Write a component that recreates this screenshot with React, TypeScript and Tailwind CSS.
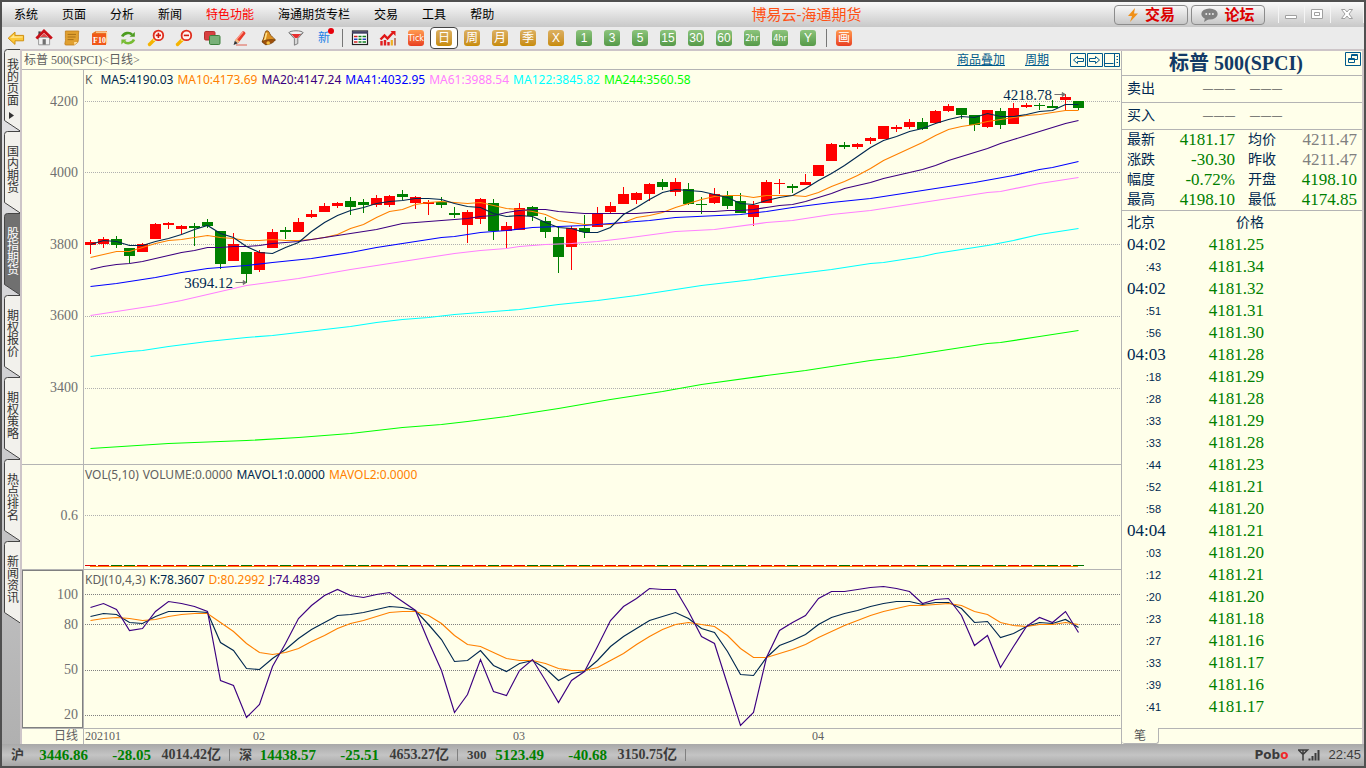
import React from "react";

type Candle = [color: string, high: number, top: number, bottom: number, low: number];
type Point = [index: number, y: number];

const LEFT = 84;
const WIDTH = 1037;
const centre = (index: number) => 90 + index * 13;

const candles: Candle[] = [
  ["r", 240, 242, 245, 254], ["r", 237, 239, 244, 248], ["g", 236, 239, 245, 248], ["g", 248, 248, 256, 263],
  ["r", 243, 244, 252, 252], ["r", 223, 224, 239, 239], ["r", 222, 223, 225, 229], ["r", 225, 226, 229, 234],
  ["g", 223, 226, 228, 246], ["g", 219, 222, 226, 228], ["g", 231, 231, 264, 269], ["r", 233, 244, 261, 261],
  ["g", 252, 252, 274, 283], ["r", 250, 252, 270, 272], ["r", 229, 232, 248, 248], ["g", 227, 230, 232, 239],
  ["r", 218, 222, 232, 232], ["r", 210, 214, 217, 218], ["r", 203, 206, 212, 212], ["r", 202, 203, 206, 208],
  ["g", 197, 201, 207, 215], ["g", 199, 202, 205, 213], ["r", 195, 198, 205, 207], ["r", 195, 196, 205, 207],
  ["g", 190, 194, 197, 200], ["r", 196, 197, 203, 209], ["r", 200, 202, 204, 215], ["g", 197, 202, 205, 208],
  ["g", 207, 213, 215, 218], ["r", 210, 212, 225, 243], ["r", 198, 199, 219, 224], ["g", 199, 203, 231, 240],
  ["r", 222, 226, 231, 248], ["r", 203, 208, 230, 230], ["g", 206, 207, 216, 221], ["g", 217, 221, 232, 238],
  ["g", 227, 237, 257, 273], ["r", 226, 228, 247, 270], ["g", 215, 228, 232, 238], ["r", 207, 213, 227, 227],
  ["r", 202, 206, 212, 213], ["r", 187, 194, 204, 204], ["r", 192, 193, 200, 204], ["r", 183, 184, 194, 201],
  ["g", 179, 182, 187, 190], ["r", 178, 182, 192, 196], ["g", 183, 189, 204, 205], ["g", 197, 204, 205, 214],
  ["r", 188, 194, 203, 204], ["g", 191, 196, 206, 209], ["g", 193, 201, 213, 213], ["r", 201, 205, 217, 226],
  ["r", 180, 182, 203, 203], ["r", 179, 183, 184, 194], ["g", 184, 186, 188, 193], ["r", 174, 182, 185, 185],
  ["r", 165, 165, 176, 176], ["r", 143, 144, 161, 161], ["g", 142, 145, 147, 149], ["r", 143, 144, 147, 149],
  ["r", 137, 138, 141, 144], ["r", 126, 126, 139, 139], ["r", 125, 127, 129, 132], ["r", 119, 122, 127, 129],
  ["g", 118, 122, 129, 130], ["r", 110, 111, 123, 123], ["r", 104, 106, 111, 112], ["g", 108, 108, 115, 119],
  ["g", 115, 115, 125, 131], ["r", 110, 110, 127, 128], ["g", 108, 111, 125, 129], ["r", 103, 108, 124, 124],
  ["r", 103, 105, 107, 108], ["g", 103, 105, 106, 110], ["g", 100, 106, 108, 108], ["r", 94, 97, 100, 110],
  ["g", 101, 101, 108, 110],
];

const dense = (values: number[]): Point[] => values.map((y, i) => [i, y]);

const ma5 = dense([244, 240, 241, 245, 245, 241, 238, 234, 229, 225, 233, 237, 246, 252, 253, 247, 242, 231, 222, 215, 210, 207, 203, 201, 200, 198, 198, 199, 203, 206, 207, 213, 216, 215, 216, 222, 227, 228, 232, 232, 227, 214, 207, 199, 192, 189, 190, 191, 194, 197, 203, 204, 200, 197, 195, 188, 180, 173, 165, 156, 147, 140, 136, 131, 128, 123, 119, 116, 117, 113, 116, 116, 114, 111, 110, 104, 104]);
const ma10 = dense([257, 254, 251, 251, 247, 243, 240, 239, 237, 235, 237, 238, 240, 240, 239, 240, 240, 239, 237, 234, 228, 224, 217, 211, 209, 204, 202, 201, 202, 203, 202, 205, 208, 209, 211, 214, 220, 222, 224, 224, 224, 222, 217, 215, 212, 207, 203, 199, 196, 195, 195, 197, 195, 195, 195, 196, 192, 186, 181, 175, 168, 160, 154, 148, 142, 135, 129, 126, 124, 121, 119, 117, 115, 114, 112, 110, 110]);
const ma20 = dense([269, 266, 264, 263, 261, 258, 255, 252, 250, 247, 247, 246, 246, 245, 243, 242, 241, 239, 237, 235, 233, 231, 229, 226, 223, 222, 221, 220, 219, 218, 216, 215, 212, 210, 209, 209, 211, 212, 213, 213, 213, 213, 213, 212, 211, 211, 211, 211, 211, 210, 210, 209, 207, 205, 204, 201, 197, 193, 188, 185, 182, 178, 175, 172, 169, 165, 160, 156, 152, 148, 143, 139, 135, 131, 127, 123, 120]);
const ma41: Point[] = [[0, 286], [2, 283], [5, 277], [7, 272], [9, 268], [12, 265], [14, 262], [17, 258], [20, 252], [22, 247], [25, 241], [27, 237], [28, 236], [30, 232], [32, 230], [34, 227], [36, 226], [38, 225], [40, 223], [43, 220], [45, 217], [50, 214], [52, 211], [54, 207], [57, 202], [60, 198], [62, 194], [65, 188], [68, 182], [71, 175], [73, 169], [74, 167], [76, 161]];
const ma61: Point[] = [[0, 315], [3, 309], [5, 305], [7, 300], [10, 291], [12, 285], [16, 278], [20, 269], [24, 261], [28, 253], [30, 250], [32, 248], [33, 246], [35, 244], [37, 243], [39, 241], [41, 238], [45, 231], [48, 229], [52, 222], [54, 220], [57, 214], [60, 210], [64, 202], [69, 192], [70, 191], [73, 183], [76, 177]];
const ma122: Point[] = [[0, 356], [3, 351], [4, 350], [6, 346], [9, 341], [12, 337], [14, 335], [18, 329], [20, 326], [22, 322], [24, 319], [26, 317], [28, 314], [33, 309], [36, 304], [39, 300], [42, 295], [45, 289], [47, 285], [51, 279], [52, 277], [57, 269], [60, 263], [61, 262], [64, 256], [65, 253], [69, 245], [71, 240], [73, 234], [76, 228]];
const ma244: Point[] = [[0, 448], [6, 443], [12, 440], [16, 437], [20, 433], [24, 427], [27, 424], [29, 421], [32, 416], [36, 408], [40, 399], [44, 391], [47, 384], [52, 375], [55, 370], [57, 366], [60, 360], [62, 357], [65, 351], [69, 343], [70, 342], [73, 336], [76, 330]];

const kLine = dense([616, 613, 614, 622, 623, 616, 611, 611, 611, 612, 642, 650, 668, 669, 658, 649, 638, 629, 622, 615, 614, 612, 609, 606, 607, 610, 624, 639, 661, 660, 650, 665, 671, 663, 660, 668, 680, 673, 671, 660, 646, 636, 628, 620, 616, 612, 618, 628, 632, 651, 674, 675, 657, 645, 640, 634, 624, 617, 613, 610, 606, 603, 601, 601, 604, 602, 602, 608, 622, 621, 637, 633, 626, 622, 623, 619, 627]);
const dLine = dense([620, 618, 617, 618, 620, 619, 616, 614, 613, 613, 622, 631, 643, 652, 654, 652, 648, 641, 635, 628, 623, 620, 616, 612, 611, 611, 615, 623, 635, 644, 646, 652, 658, 660, 660, 663, 668, 670, 670, 667, 660, 653, 644, 636, 629, 624, 622, 624, 626, 635, 648, 657, 657, 653, 649, 644, 637, 631, 625, 620, 615, 611, 608, 605, 605, 604, 603, 605, 611, 614, 622, 625, 626, 624, 624, 622, 624]);
const jLine = dense([607, 603, 609, 630, 628, 611, 601, 603, 606, 611, 680, 685, 717, 704, 666, 643, 618, 605, 595, 589, 595, 597, 594, 592, 601, 610, 641, 670, 712, 694, 659, 691, 695, 670, 659, 680, 702, 680, 671, 646, 620, 606, 598, 588, 589, 589, 611, 636, 643, 684, 725, 712, 657, 630, 622, 615, 598, 591, 591, 589, 587, 586, 588, 591, 603, 599, 598, 615, 645, 635, 667, 646, 626, 617, 622, 611, 632]);

const SERIF = "font-['Liberation_Serif','Noto_Sans_CJK_SC',serif]";
const LEGEND = "font-['Noto_Sans',sans-serif]";

function Line({ points, color }: { points: Point[]; color: string }) {
  return (
    <polyline
      points={points.map(([i, y]) => `${centre(i) + 0.5},${y + 0.5}`).join(" ")}
      fill="none"
      stroke={color}
      strokeWidth="1.15"
      vectorEffect="non-scaling-stroke"
    />
  );
}

interface PanelProps {
  top: number;
  height: number;
  grid: number[];
  gridColor: string;
  labels: [string, number][];
  boxed?: boolean;
  legend: [string, string][];
  notes?: [string, number, number][];
  className: string;
  children: React.ReactNode;
}

function Panel({ top, height, grid, gridColor, labels, boxed, legend, notes = [], className, children }: PanelProps) {
  return (
    <section className={`flex min-h-0 basis-0 border-b border-[#b4b4b4] ${className}`}>
      <div className={`relative w-[61px] shrink-0 border ${boxed ? "border-[#808080]" : "border-transparent"}`}>
        {labels.map(([text, y]) => (
          <span
            key={text}
            className={`absolute right-1 -translate-y-1/2 text-sm leading-4 text-[#707070] ${SERIF}`}
            style={{ top: `${((y + 0.5 - top) / height) * 100}%` }}
          >
            {text}
          </span>
        ))}
      </div>
      <div className="relative min-w-0 flex-1 border-l border-[#b4b4b4]">
        <svg className="absolute inset-0 h-full w-full" viewBox={`${LEFT} ${top} ${WIDTH} ${height}`} preserveAspectRatio="none">
          {grid.map((y) => (
            <line key={y} x1={LEFT + 1} x2={LEFT + WIDTH} y1={y + 0.5} y2={y + 0.5} stroke={gridColor} strokeDasharray="1 1" shapeRendering="crispEdges" />
          ))}
          {children}
        </svg>
        <div className={`absolute left-px top-0.5 flex gap-1 whitespace-nowrap text-xs leading-4 ${LEGEND}`}>
          {legend.map(([text, color]) => (
            <span key={text} className={color}>{text}</span>
          ))}
        </div>
        {notes.map(([text, x, y]) => (
          <span
            key={text}
            className={`absolute flex -translate-x-full -translate-y-1/2 items-center gap-0.5 text-[15px] leading-4 text-[#002850] ${SERIF}`}
            style={{ left: `${((x - LEFT) / WIDTH) * 100}%`, top: `${((y + 0.5 - top) / height) * 100}%` }}
          >
            {text}
            <svg width="12" height="7" viewBox="0 0 12 7" stroke="#707070" fill="#707070">
              <path d="M0 3.5h10" />
              <path d="M8 1.5l3 2-3 2z" />
            </svg>
          </span>
        ))}
      </div>
    </section>
  );
}

function Tile({ label, tone }: { label: string; tone: "gold" | "green" | "red" }) {
  const tones = {
    gold: "from-[#dcb060] to-[#c88c00]",
    green: "from-[#8cc47c] to-[#559a48]",
    red: "from-[#ff9a50] to-[#e83c20]",
  };
  return (
    <span
      className={`flex size-4 items-center justify-center rounded-[3px] bg-linear-to-b text-white ${tones[tone]} ${
        label.length > 2 ? "font-['Liberation_Sans_Narrow','DejaVu_Sans_Condensed',sans-serif] text-[9px] leading-4" : "font-['Liberation_Sans','Noto_Sans_CJK_SC',sans-serif] text-xs leading-4"
      }`}
    >
      {label}
    </span>
  );
}

function Icon({ children }: { children: React.ReactNode }) {
  return <svg width="18" height="18" viewBox="0 0 18 18" aria-hidden="true">{children}</svg>;
}

function Magnifier({ plus }: { plus: boolean }) {
  return (
    <Icon>
      <path d="M2.5 15.5l4.5-4.5" stroke="#f5b400" strokeWidth="3.4" strokeLinecap="round" />
      <path d="M6.4 11.6l1.4-1.4" stroke="#ffe680" strokeWidth="2" />
      <circle cx="11.4" cy="6.4" r="4.8" fill="#fff4f2" stroke="#e02c1c" strokeWidth="1.8" />
      <path d={plus ? "M8.8 6.4h5.2M11.4 3.8v5.2" : "M8.8 6.4h5.2"} stroke="#d01c10" strokeWidth="1.6" />
    </Icon>
  );
}

const tools: { name: string; icon: React.ReactNode }[] = [
  { name: "后退", icon: <Icon><path d="M1.2 9.2L8 3v3.4h8.6v5.4H8v3.6z" fill="#fcc838" stroke="#d09010" /><path d="M3.4 9L7 5.8v1.6h8.6v1.2z" fill="#ffe896" /></Icon> },
  { name: "首页", icon: <Icon><path d="M3.6 8.4h11v7.4h-11z" fill="#f2f2f2" stroke="#888" strokeWidth=".8" /><path d="M3.4 2.4h2.4v4H3.4z" fill="#444" /><path d="M1.4 9.4L9 2l7.8 7.4" fill="none" stroke="#c81018" strokeWidth="2.8" /><path d="M5.4 8L9 4.4 12.8 8z" fill="#e04848" /><path d="M7.6 10.2h3.2v5.4H7.6z" fill="#707070" /></Icon> },
  { name: "便笺", icon: <Icon><path d="M2.4 2h13.4c-1 4 .4 8-1 11.4l-3.6 2.6H2.4c-1.4-1.4.6-3.4 0-6.4z" fill="#e0a030" stroke="#c07c18" strokeWidth=".8" /><path d="M4.6 5.4h8.4M4.6 8h8M4.6 10.6h6" stroke="#a87018" strokeWidth="1" /><path d="M11.2 16v-3h3.6z" fill="#ffe0a0" /></Icon> },
  { name: "F10", icon: <Icon><path d="M1 4.5l4-2.500h11v11l-1.500 3H1z" fill="#e87020" /><path d="M5 3.200h10.500M15.800 3v11" stroke="#ffe0b0" strokeWidth="1.200" /><rect x="1" y="5" width="14" height="11" fill="#f05818" /><text x="2" y="13.600" fill="#fff" fontSize="8" fontWeight="bold" fontFamily="Liberation Serif, serif">F10</text></Icon> },
  { name: "刷新", icon: <Icon><path d="M3.200 7.600C4.800 3.600 10.600 3 13 5.600" fill="none" stroke="#4c9c20" strokeWidth="2.600" /><path d="M10.600 7.800h5.200V3z" fill="#4c9c20" /><path d="M15 10.600c-1.600 4-7.400 4.600-9.800 2" fill="none" stroke="#78bc34" strokeWidth="2.600" /><path d="M7.600 10.400H2.400v5z" fill="#78bc34" /></Icon> },
  { name: "放大", icon: <Magnifier plus /> },
  { name: "缩小", icon: <Magnifier plus={false} /> },
  { name: "叠加", icon: <Icon><rect x="1.500" y="2.500" width="10.500" height="8.500" rx="1.200" fill="#d84040" stroke="#b43030" /><rect x="6.500" y="6.500" width="10.500" height="9" rx="1.200" fill="#78b078" stroke="#3c803c" /></Icon> },
  { name: "画笔", icon: <Icon><path d="M2.600 16l1.200-4.200 3 2.400z" fill="#333" /><path d="M4 11.400L11.400 2.400c1.600-.600 3.200.800 3 2.400L7.200 14z" fill="#e83c2c" /><path d="M5 11.200l7-8.200" stroke="#ffa090" strokeWidth="1.200" /><path d="M4 11.400l1.400-1.600 3 2.600L7 14z" fill="#f0c080" /><path d="M5 16h11" stroke="#e06050" /></Icon> },
  { name: "预警", icon: <Icon><path d="M6.800 2.200c2-1.200 3.600.800 3.800 2.200 1.400 3 4 4.400 5.800 6.400L7 15.600 3 12.600C5.400 9.200 5 5.600 6.800 2.200z" fill="#dc9020" stroke="#80480c" strokeWidth=".9" /><path d="M7.600 3.800c-.8 2.400-.8 5-2.200 8" fill="none" stroke="#ffe088" strokeWidth="1.600" /><path d="M3 12.800c3-2.200 9.400-2.800 13.200-1.800-2 3.600-7.800 5-10 4.600z" fill="#a0500c" stroke="#70400c" strokeWidth=".7" /><circle cx="9.200" cy="14" r="1.800" fill="#f4c040" /></Icon> },
  { name: "筛选", icon: <Icon><path d="M2 3.800l5.400 5.800v6.600l3.400-1.600v-5L16 3.800z" fill="#d8d8d8" stroke="#686868" strokeWidth=".8" /><ellipse cx="9" cy="3.800" rx="7" ry="2" fill="#f0f0f0" stroke="#777" /><path d="M4.400 5l3.600 4h2.400l3.400-4z" fill="#e83030" /></Icon> },
  { name: "新", icon: <span className="relative text-xs leading-4 text-[#2080e8]">新<span className="absolute -right-1 -top-0.5 size-1.5 rounded-full bg-red-600" /></span> },
];

const views: { name: string; icon: React.ReactNode }[] = [
  { name: "报价表", icon: <Icon><rect x="1.500" y="2" width="15" height="13.500" fill="#fff" stroke="#222" strokeWidth="1.200" /><path d="M1 3.500h16" stroke="#446" strokeWidth="2.400" /><path d="M3 7.500h3.500M3 13h3.500" stroke="#d02020" strokeWidth="1.400" /><path d="M3 10.200h3.500M11.500 10.200H15" stroke="#2040c0" strokeWidth="1.400" /><path d="M7.500 7.500h3M7.500 10.200h3M7.500 13h3M11.500 7.500H15M11.500 13H15" stroke="#108020" strokeWidth="1.400" /></Icon> },
  { name: "走势图", icon: <Icon><path d="M2.500 12v4.500M6 11v5.500M9.500 13v3.500" stroke="#e02020" strokeWidth="2.400" /><path d="M12.800 11v5.500" stroke="#f0b020" strokeWidth="2.200" /><path d="M16 9v7.500" stroke="#c08070" strokeWidth="2" /><path d="M1.500 10.500l4-4 3 3 6-6.500" fill="none" stroke="#e01818" strokeWidth="2.400" /><path d="M11.500 2h5v5z" fill="#e01818" /></Icon> },
  { name: "Tick", icon: <Tile label="Tick" tone="red" /> },
  ...["日", "周", "月", "季", "X"].map((label) => ({ name: label, icon: <Tile label={label} tone="gold" /> })),
  ...["1", "3", "5", "15", "30", "60", "2hr", "4hr", "Y"].map((label) => ({ name: label, icon: <Tile label={label} tone="green" /> })),
];

function ToolButton({ name, icon }: { name: string; icon: React.ReactNode }) {
  const active = name === "日";
  return (
    <button
      type="button"
      aria-label={name}
      aria-pressed={active}
      className={`flex h-[22px] w-7 shrink-0 items-center justify-center rounded-[4px] border ${active ? "border-[#444] bg-white" : "border-transparent"}`}
    >
      {icon}
    </button>
  );
}

const Divider = () => (
  <span className="flex w-2 shrink-0 justify-center">
    <span className="h-[18px] w-px bg-[#777]" />
  </span>
);

const menus = ["系统", "页面", "分析", "新闻", "特色功能", "海通期货专栏", "交易", "工具", "帮助"];
const pages = ["我的页面", "国内期货", "股指期货", "期权报价", "期权策略", "热点排名", "新闻资讯"];

function PageTab({ name }: { name: string }) {
  const active = name === "股指期货";
  const first = name === "我的页面";
  return (
    <button type="button" className={`relative flex h-[82px] w-[18px] shrink-0 flex-col items-center pl-px ${first ? "pt-[9px]" : "pt-[14px]"} ${active ? "text-white" : "text-[#333]"}`}>
      <svg className="absolute inset-0" width="18" height="82" viewBox="0 0 18 82" aria-hidden="true">
        <path d="M19 .5H5.500Q2.500.5 2.500 3.500V71.500L19 82.500z" fill={active ? "#707070" : "#f2f1ec"} stroke="#444" />
      </svg>
      <span className="relative text-xs leading-3 [writing-mode:vertical-rl]">{name}</span>
      {first && <svg className="relative mt-1.5" width="5" height="7" viewBox="0 0 5 7"><path d="M0 0l5 3.500L0 7z" fill="#333" /></svg>}
    </button>
  );
}

const quotes: [string, string, string, string, boolean][] = [
  ["最新", "4181.17", "均价", "4211.47", true],
  ["涨跌", "-30.30", "昨收", "4211.47", true],
  ["幅度", "-0.72%", "开盘", "4198.10", false],
  ["最高", "4198.10", "最低", "4174.85", false],
];

const ticks: [string, string][] = [
  ["04:02", "4181.25"], [":43", "4181.34"], ["04:02", "4181.32"], [":51", "4181.31"], [":56", "4181.30"],
  ["04:03", "4181.28"], [":18", "4181.29"], [":28", "4181.28"], [":33", "4181.29"], [":33", "4181.28"],
  [":44", "4181.23"], [":52", "4181.21"], [":58", "4181.20"], ["04:04", "4181.21"], [":03", "4181.20"],
  [":12", "4181.21"], [":20", "4181.20"], [":23", "4181.18"], [":27", "4181.16"], [":33", "4181.17"],
  [":39", "4181.16"], [":41", "4181.17"],
];

function Dashes() {
  return (
    <span className="flex gap-px text-[10px] font-bold leading-4 text-[#606060]">
      <span>—</span><span>—</span><span>—</span>
    </span>
  );
}

function QuotePanel() {
  return (
    <aside className={`flex w-[240px] shrink-0 flex-col text-[#002850] ${SERIF}`}>
      <div className="relative flex h-[25px] items-center justify-center border-b border-[#b4b4b4] pr-3">
        <h2 className="whitespace-nowrap text-xl font-bold leading-6 text-[#123a66]">标普 500(SPCI)</h2>
        <button type="button" aria-label="弹出窗口" className="absolute right-px top-px">
          <svg width="16" height="14" viewBox="0 0 16 14" fill="none" stroke="#005a8c">
            <path d="M.5.5h15v13H.5zM6.500 6V2.500h6v5H10M3.500 6.500h6v4h-6zM6.500 3.500h6M3.500 7.500h6" />
          </svg>
        </button>
      </div>
      {["卖出", "买入"].map((side) => (
        <div key={side} className="flex h-[27px] items-center border-b border-[#b4b4b4] pl-[5px] text-sm leading-5">
          <span className="w-[76px]">{side}</span>
          <span className="flex gap-[15px]"><Dashes /><Dashes /></span>
        </div>
      ))}
      <table className="w-full table-fixed border-b border-[#b4b4b4]">
        <tbody>
          {quotes.map(([a, av, b, bv, neutral]) => (
            <tr key={a} className="h-5">
              <th className="w-[40px] p-0 pl-[5px] text-left text-sm font-normal leading-5">{a}</th>
              <td className="w-[73px] p-0 text-right text-[17px] leading-5 text-[#008000]">{av}</td>
              <th className="w-[50px] p-0 pl-[13px] text-left text-sm font-normal leading-5">{b}</th>
              <td className={`p-0 pr-[5px] text-right text-[17px] leading-5 ${neutral ? "text-[#808080]" : "text-[#008000]"}`}>{bv}</td>
            </tr>
          ))}
        </tbody>
      </table>
      <div className="min-h-0 flex-1 overflow-hidden pt-px">
        <table className="table-fixed">
          <thead>
            <tr className="h-[22px] text-sm leading-5">
              <th className="w-[45px] p-0 pl-[5px] text-left font-normal">北京</th>
              <th className="w-[97px] p-0 text-right font-normal">价格</th>
            </tr>
          </thead>
          <tbody>
            {ticks.map(([time, price], i) => (
              <tr key={i} className="h-[22px]">
                <td className={`p-0 leading-5 ${time.length > 3 ? "pl-[5px] text-[17px]" : "pr-1.5 text-right font-['Liberation_Sans',sans-serif] text-[11px]"}`}>{time}</td>
                <td className="p-0 text-right text-[17px] leading-5 text-[#008000]">{price}</td>
              </tr>
            ))}
          </tbody>
        </table>
      </div>
      <div className="flex h-4 shrink-0">
        <button type="button" className="w-[37px] rounded-b-[3px] border-b border-r border-[#b4b4b4] text-xs leading-[14px] text-[#555]">笔</button>
        <span className="flex-1 border-t border-[#b4b4b4]" />
      </div>
    </aside>
  );
}

const indices = [
  { name: "沪", value: "3446.86", change: "-28.05", amount: "4014.42亿" },
  { name: "深", value: "14438.57", change: "-25.51", amount: "4653.27亿" },
  { name: "300", value: "5123.49", change: "-40.68", amount: "3150.75亿" },
];

function StatusBar() {
  return (
    <footer className={`flex h-[22px] shrink-0 items-center bg-linear-to-b from-[#a8a8a8] via-[#c4c4c4] to-[#a6a6a6] text-[15px] leading-5 text-[#3c3c3c] ${SERIF}`}>
      {indices.map((item) => (
        <div key={item.name} className="flex items-center pl-[9px] font-bold">
          <span className="flex w-[77px] items-center justify-between">
            <span className="text-[13px]">{item.name}</span>
            <span className="text-[#008000]">{item.value}</span>
          </span>
          <span className="w-[63px] text-right text-[#008000]">{item.change}</span>
          <span className="w-[70px] whitespace-nowrap text-right text-sm leading-5">{item.amount}</span>
          <span className="ml-2 h-3 w-px bg-[#808080]" />
        </div>
      ))}
      <div className="ml-auto flex items-center pr-[3px] font-['Liberation_Sans',sans-serif]">
        <span className="font-['DejaVu_Sans',sans-serif] text-xs font-bold">Pob<span className="text-[#f02828]">o</span></span>
        <svg className="ml-2.5" width="22" height="12" viewBox="0 0 22 12" fill="none" stroke="#3c3c3c">
          <path d="M.5 1h9L5 5.500zM5 1v10.500" strokeWidth="1.500" />
          <path d="M11.500 9.500v2M14.500 7v4.500M17.500 4v7.500M20.500 1v10.500" strokeWidth="2" />
        </svg>
        <span className="ml-2 text-[13px] leading-5">22:45</span>
      </div>
    </footer>
  );
}

const months: [string, number][] = [["02", 13], ["03", 33], ["04", 56]];

const headerIcons: [string, string][] = [
  ["前移", "M3.500 7l4-3.500V5.500h6v3h-6v2z"],
  ["后移", "M12.500 7l-4-3.500V5.500h-6v3h6v2z"],
  ["布局", "M.5 10.500h9M10.500.5v13M12.500 3.500h1.500M12.500 6.500h1.500M12.500 9.500h1.500"],
];

export default function App() {
  return (
    <div className="flex h-screen min-h-[600px] flex-col overflow-hidden border-2 border-[#505050] bg-[#ececec] font-['Liberation_Sans','Noto_Sans_CJK_SC',sans-serif]">
      <header className="flex h-[25px] shrink-0 items-center justify-between bg-linear-to-b from-[#fafafa] to-[#c8c8c8]">
        <nav className="flex">
          {menus.map((item) => (
            <button key={item} type="button" className={`px-3 text-xs leading-6 ${item === "特色功能" ? "text-[#ff0000]" : "text-black"}`}>{item}</button>
          ))}
        </nav>
        <h1 className="ml-auto mr-auto pr-[7px] text-[15px] leading-6 text-[#ff5014]">博易云-海通期货</h1>
        <div className="flex items-center gap-[3px]">
          <button type="button" className="flex h-5 w-[74px] items-center justify-center gap-1.5 rounded-[4px] border border-[#8c8c8c] bg-linear-to-b from-[#f8f8f8] to-[#c8c8c8] text-[15px] font-bold leading-5 text-[#dc0000]">
            <svg width="12" height="14" viewBox="0 0 12 14"><path d="M8 0L1 8h4L3 14l8-8.500H7z" fill="#f09018" /></svg>
            交易
          </button>
          <button type="button" className="flex h-5 w-[74px] items-center justify-center gap-1.5 rounded-[4px] border border-[#8c8c8c] bg-linear-to-b from-[#f8f8f8] to-[#c8c8c8] text-[15px] font-bold leading-5 text-[#dc0000]">
            <svg width="17" height="14" viewBox="0 0 17 14"><ellipse cx="8.500" cy="6" rx="8.200" ry="5.600" fill="#808080" /><path d="M4 10l-1 4 5-3z" fill="#808080" /><path d="M4.500 6h1.600M7.800 6h1.600M11.100 6h1.600" stroke="#fff" strokeWidth="1.600" /></svg>
            论坛
          </button>
          <div className="ml-2.5 flex w-[86px] self-start">
            <button type="button" aria-label="最小化" className="flex h-[18px] flex-1 items-center justify-center border-l border-[#f4f4f4]">
              <svg width="14" height="12" viewBox="0 0 14 12" fill="#fff" stroke="#a0a0a0"><path d="M1.500 7.500h11v3h-11z" /></svg>
            </button>
            <button type="button" aria-label="还原" className="flex h-[18px] flex-1 items-center justify-center border-l border-[#f4f4f4]">
              <svg width="14" height="12" viewBox="0 0 14 12" fill="#fff" stroke="#a0a0a0"><path d="M1.500 1.500h11v9h-11zM4.500 4.500h5v3h-5z" /></svg>
            </button>
            <button type="button" aria-label="关闭" className="flex h-[18px] w-[34px] items-center justify-center border-x border-[#f4f4f4]">
              <svg width="14" height="12" viewBox="0 0 14 12" fill="#fff" stroke="#a0a0a0"><path d="M1.500 1.500h3.500l2 2.500 2-2.500h3.500L9 6l3.500 4.500H9L7 8l-2 2.500H1.500L5 6z" /></svg>
            </button>
          </div>
        </div>
      </header>

      <div className="flex h-[22px] shrink-0 items-center bg-[#ebebeb]">
        {tools.map((t) => <ToolButton key={t.name} {...t} />)}
        <Divider />
        {views.map((t) => <ToolButton key={t.name} {...t} />)}
        <Divider />
        <ToolButton name="画" icon={<Tile label="画" tone="red" />} />
      </div>

      <div className="flex min-h-0 flex-1">
        <nav className="flex w-[18px] shrink-0 flex-col bg-linear-to-b from-[#e4e4e6] via-[#d0d0d2] to-[#b0b0b0]">
          {pages.map((name) => <PageTab key={name} name={name} />)}
        </nav>
        <div className="flex min-w-0 flex-1 border-x-2 border-t-2 border-[#cdc5c8] bg-[#ffffea]">
          <main className="flex min-w-0 flex-1 flex-col border-r border-[#b4b4b4]">
            <div className={`flex h-[19px] shrink-0 items-center border-b border-[#b4b4b4] pl-0.5 pr-px text-xs leading-4 text-[#606060] ${SERIF}`}>
              <span>标普 500(SPCI)&lt;日线&gt;</span>
              <span className="ml-auto flex items-center text-[#005a8c]">
                <a href="#overlay" className="underline">商品叠加</a>
                <a href="#period" className="ml-5 underline">周期</a>
                <span className="ml-[21px] flex gap-px">
                  {headerIcons.map(([name, d]) => (
                    <button key={name} type="button" aria-label={name}>
                      <svg className="block" width="16" height="14" viewBox="0 0 16 14" fill="none" stroke="#005a8c"><path d="M.5.5h15v13H.5z" /><path d={d} /></svg>
                    </button>
                  ))}
                </span>
              </span>
            </div>

            <Panel
              className="grow-[394]"
              top={70}
              height={394}
              grid={[101, 172, 244, 316, 388]}
              gridColor="#b0b0b0"
              labels={[["4200", 101], ["4000", 172], ["3800", 244], ["3600", 316], ["3400", 388]]}
              legend={[["K", "pr-1 text-[#606060]"], ["MA5:4190.03", "text-[#002850]"], ["MA10:4173.69", "text-[#ff8000]"], ["MA20:4147.24", "text-[#3c0080]"], ["MA41:4032.95", "text-[#0000ff]"], ["MA61:3988.54", "text-[#ff80ff]"], ["MA122:3845.82", "text-[#00ffff]"], ["MA244:3560.58", "text-[#00ff00]"]]}
              notes={[["3694.12", 247, 282], ["4218.78", 1066, 94]]}
            >
              {candles.map(([color, high, top, bottom, low], i) => (
                <g key={i} fill={color === "r" ? "#ff0000" : "#008000"} shapeRendering="crispEdges">
                  <rect x={centre(i)} y={high} width="1" height={low - high} />
                  <rect x={centre(i) - 5} y={top} width="11" height={bottom - top} />
                </g>
              ))}
              <Line points={ma10} color="#ff8000" />
              <Line points={ma20} color="#3c0080" />
              <Line points={ma41} color="#0000ff" />
              <Line points={ma61} color="#ff80ff" />
              <Line points={ma122} color="#00ffff" />
              <Line points={ma244} color="#00ff00" />
              <Line points={ma5} color="#002850" />
            </Panel>

            <Panel
              className="grow-[104]"
              top={465}
              height={104}
              grid={[515]}
              gridColor="#b0b0b0"
              labels={[["0.6", 515]]}
              legend={[["VOL(5,10)", "text-[#606060]"], ["VOLUME:0.0000", "text-[#606060]"], ["MAVOL1:0.0000", "text-[#002850]"], ["MAVOL2:0.0000", "text-[#ff8000]"]]}
            >
              <g shapeRendering="crispEdges">
                {candles.map(([color], i) => (
                  <rect key={i} x={centre(i) - 5} y={565} width="11" height="1" fill={color === "r" ? "#e00000" : "#007000"} />
                ))}
                <rect x={centre(0)} y={566} width={13 * 76} height="1" fill="#ff8000" />
              </g>
            </Panel>

            <Panel
              className="grow-[158]"
              top={570}
              height={158}
              boxed
              grid={[594, 624, 670, 715]}
              gridColor="#808080"
              labels={[["100", 594], ["80", 624], ["50", 670], ["20", 715]]}
              legend={[["KDJ(10,4,3)", "text-[#606060]"], ["K:78.3607", "text-[#002850]"], ["D:80.2992", "text-[#ff8000]"], ["J:74.4839", "text-[#3c0080]"]]}
            >
              <Line points={kLine} color="#002850" />
              <Line points={dLine} color="#ff8000" />
              <Line points={jLine} color="#3c0080" />
            </Panel>

            <div className={`flex h-[15px] shrink-0 text-xs leading-[15px] text-[#606060] ${SERIF}`}>
              <span className="w-[61px] pr-[5px] text-right">日线</span>
              <div className="relative flex-1 border-l border-[#b4b4b4] pl-px">
                202101
                {months.map(([label, index]) => (
                  <span key={label} className="absolute top-0 -translate-x-1/2" style={{ left: `${((centre(index) - LEFT) / WIDTH) * 100}%` }}>{label}</span>
                ))}
              </div>
            </div>
          </main>
          <QuotePanel />
        </div>
      </div>
      <StatusBar />
    </div>
  );
}
